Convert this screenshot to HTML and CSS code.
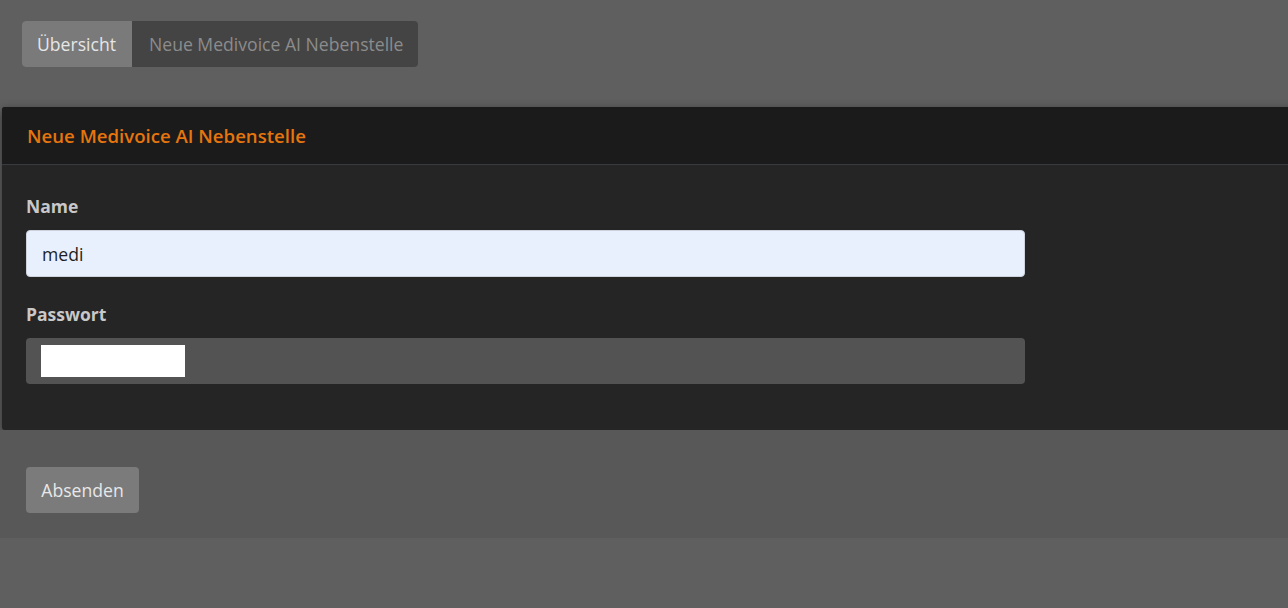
FILE: index.html
```html
<!DOCTYPE html>
<html lang="de">
<head>
<meta charset="utf-8">
<title>Neue Medivoice AI Nebenstelle</title>
<link rel="stylesheet" href="styles.css">
</head>
<body>
<div class="page">
  <nav class="crumbs">
    <a class="crumb active">Übersicht</a>
    <span class="crumb current">Neue Medivoice AI Nebenstelle</span>
  </nav>
  <section class="card">
    <header class="card-head">Neue Medivoice AI Nebenstelle</header>
    <div class="card-body">
      <div class="field">
        <label class="label">Name</label>
        <div class="input filled">medi</div>
      </div>
      <div class="field">
        <label class="label">Passwort</label>
        <div class="input pw"><span class="mask"></span></div>
      </div>
    </div>
  </section>
  <div class="actions">
    <button class="btn">Absenden</button>
  </div>
</div>
</body>
</html>
```
FILE: styles.css
```css
html, body { margin: 0; padding: 0; }
body {
  background: #5f5f5f;
  font-family: "Open Sans", "Noto Sans", sans-serif;
  font-size: 17.6px;
  overflow: hidden;
}
.page { display: flex; flex-direction: column; align-items: flex-start; }
.crumbs {
  display: flex;
  margin: 21px 0 0 22px;
  height: 46px;
  background: #444444;
  border-radius: 4px;
  overflow: hidden;
}
.crumb {
  display: flex; align-items: center;
  padding: 0 15px 0 15px;
  color: #8c8c8c;
}
.crumb.active { background: #7a7a7a; color: #e6e6e6; width: 80px; padding: 0 15px; font-weight: 500; }
.crumb.current { padding: 0 15px 0 17px; }
.card {
  align-self: stretch;
  margin: 40px -20px 0 2px;
  background: #252525;
  box-shadow: 0 3px 10px rgba(0,0,0,0.5);
  border-radius: 3px 0 0 3px;
}
.card-head {
  height: 57px;
  display: flex; align-items: center;
  padding-left: 25px;
  background: #1b1b1b;
  border-bottom: 1px solid #383b40;
  color: #e6750e;
  font-size: 18.6px;
  font-weight: 600;
  border-radius: 3px 0 0 0;
}
.card-body { padding: 31px 0 46px 24px; display: flex; flex-direction: column; gap: 27px; }
.field { display: flex; flex-direction: column; gap: 14px; }
.label { color: #c8c8c8; font-weight: 700; font-size: 17.5px; line-height: 20px; }
.input {
  width: 999px; height: 47px; box-sizing: border-box;
  border-radius: 4px;
  display: flex; align-items: center;
  padding-left: 15px;
}
.input.filled { background: #e8f0fe; color: #1e1e1e; border: 1px solid #cdd3dc; }
.input.pw { background: #535353; height: 46px; }
.mask { width: 144px; height: 32px; background: #ffffff; }
.actions {
  align-self: stretch;
  background: #585858;
  padding: 37px 0 25px 26px;
}
.btn {
  font-family: inherit; font-size: 17.6px;
  background: #7b7b7b; color: #e8e8e8;
  border: none; border-radius: 4px;
  width: 113px; height: 46px;
  padding: 0;
}
```
